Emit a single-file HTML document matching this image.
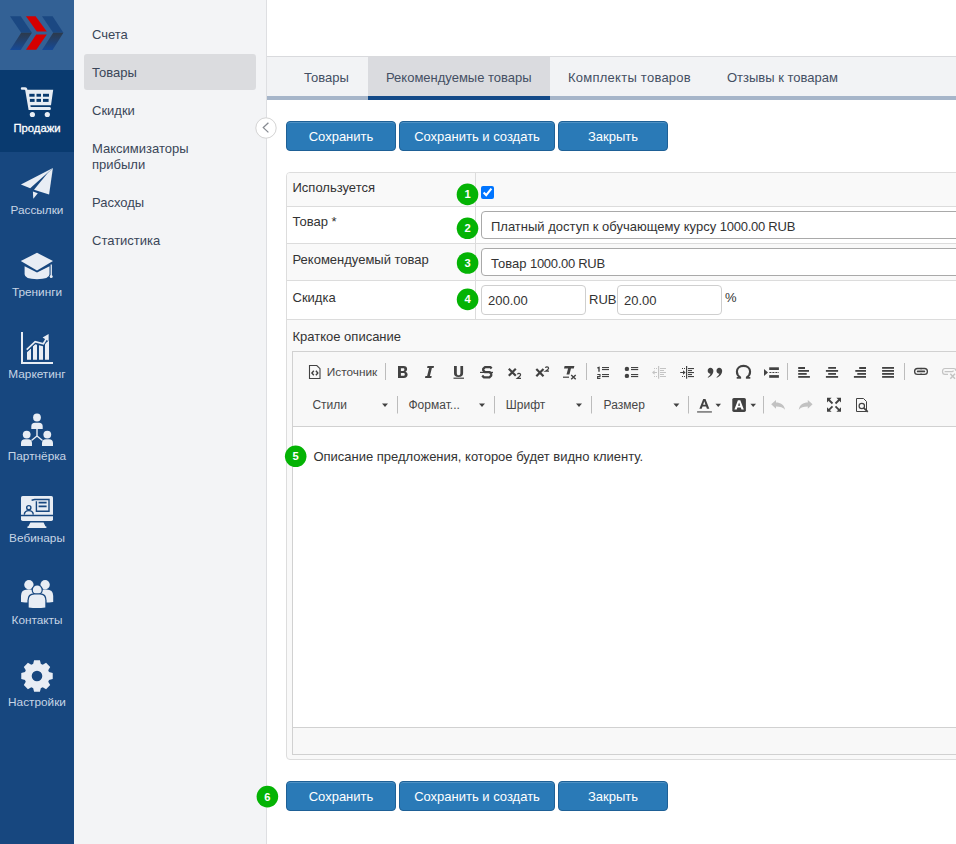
<!DOCTYPE html>
<html><head><meta charset="utf-8">
<style>
*{box-sizing:border-box}
html,body{margin:0;padding:0;width:956px;height:844px;overflow:hidden;background:#fff;font-family:"Liberation Sans",sans-serif}
.abs{position:absolute}
#nav{left:0;top:0;width:74px;height:844px;background:#17477f}
#logo{left:0;top:0;width:74px;height:70px;background:#336195}
.ni{position:absolute;left:0;width:74px;height:82px}
.ni.act{background:#093a6f}
.ni svg{position:absolute;left:0;top:0}
.ni span{position:absolute;left:0;width:74px;text-align:center;font-size:11.8px;color:#c8d5e5;top:50.5px;line-height:14px;white-space:nowrap}
.ni.act span{color:#fff;font-size:11.3px;-webkit-text-stroke:0.3px #fff}
#sub{left:74px;top:0;width:193px;height:844px;background:#f3f4f6;border-right:1px solid #dedfe2}
.si{position:absolute;left:10px;width:172px;font-size:13px;color:#3a4658;line-height:16px;padding-left:8px}
.si.act{background:#dbdcdf;border-radius:3px}
#tabs{z-index:2;left:267px;top:56px;width:689px;height:40px;border-top:1px solid #d9dadd;background:#f2f3f5}
#tabbar{left:267px;top:96px;width:689px;height:4px;background:#a6b5c9}
.tab{position:absolute;top:0;height:39px;font-size:13px;color:#444f63;line-height:39px;padding-top:1px !important;padding:0 18px;white-space:nowrap}
.tab.act{background:#dadbdf}
.tab.act:after{content:"";position:absolute;left:0;right:0;top:39px;height:4px;background:#134a88}
.btn{position:absolute;height:30px;background:#2a7ab7;border:1px solid #1e6096;border-radius:4px;box-shadow:inset 0 1px 0 rgba(255,255,255,0.18);color:#fff;font-size:13px;text-align:center;line-height:30px;white-space:nowrap}
.badge{position:absolute;width:22px;height:22px;border-radius:50%;background:#06b006;color:#fff;font-weight:bold;font-size:11px;text-align:center;line-height:22px}
#form{left:286px;top:172px;width:700px;height:588px;border:1px solid #dddddd;border-radius:4px;background:#f9f9f9;overflow:hidden}
.row{position:absolute;left:0;width:700px;border-bottom:1px solid #dcdcdc}
.lbl{position:absolute;left:5.5px;font-size:13px;color:#333;line-height:16px;white-space:nowrap}
.inp{position:absolute;background:#fff;border:1px solid #b9b9b9;border-radius:4px;font-size:13px;color:#333;white-space:nowrap;line-height:16px}
</style></head><body>

<div id="nav" class="abs">
  <div id="logo" class="abs"></div>
  <div class="ni act" style="top:70px"><span>Продажи</span></div>
  <div class="ni" style="top:152px"><span>Рассылки</span></div>
  <div class="ni" style="top:234px"><span>Тренинги</span></div>
  <div class="ni" style="top:316px"><span>Маркетинг</span></div>
  <div class="ni" style="top:398px"><span>Партнёрка</span></div>
  <div class="ni" style="top:480px"><span>Вебинары</span></div>
  <div class="ni" style="top:562px"><span>Контакты</span></div>
  <div class="ni" style="top:644px"><span>Настройки</span></div>
</div>

<svg class="abs" style="left:0;top:0" width="74" height="844" viewBox="0 0 74 844">
 <defs>
  <linearGradient id="lg" x1="0" y1="33" x2="0" y2="50" gradientUnits="userSpaceOnUse">
   <stop offset="0" stop-color="#2c3a4c"/><stop offset="1" stop-color="#164a97"/>
  </linearGradient>
 </defs>
 <!-- logo -->
 <path d="M10,16.2 H20.7 L31.9,32.8 H21.2 Z" fill="#1b4882"/>
 <path d="M21.2,32.8 H31.9 L20.7,50 H10 Z" fill="url(#lg)"/>
 <path d="M42,16.2 H52.6 L63.4,32.8 H53.2 Z" fill="#1b4882"/>
 <path d="M53.2,32.8 H63.4 L52.6,50 H42 Z" fill="url(#lg)"/>
 <path d="M26,16.2 H35.6 L46.8,31.4 H36.8 Z" fill="#d50000"/>
 <path d="M36.2,34.4 H46.8 L36.3,49.8 H26 Z" fill="#d50000"/>
 <g fill="#e8edf4">
  <!-- cart -->
  <path d="M22,87.2 H25.3 Q26.9,87.2 27.2,88.7 L27.4,89.8 H53.2 L51,105.2 H30.4 L30.7,107 H49.6 Q50.9,107 50.9,108.5 Q50.9,110 49.6,110 H28.6 L25.2,90.2 Q25,89.7 24.5,89.7 H22 Q20.8,89.7 20.8,88.45 Q20.8,87.2 22,87.2 Z"/>
  <g fill="#093a6f">
   <rect x="29.3" y="93.8" width="5.3" height="2.9"/><rect x="36.5" y="93.8" width="4.5" height="2.9"/><rect x="43" y="93.8" width="6" height="2.9"/>
   <rect x="29.9" y="98.9" width="4.7" height="3"/><rect x="36.5" y="98.9" width="4.5" height="3"/><rect x="43" y="98.9" width="5.6" height="3"/>
  </g>
  <circle cx="32.4" cy="114.5" r="2.6"/><circle cx="47.3" cy="114.5" r="2.6"/>
  <!-- plane -->
  <path d="M20.9,184.5 L52.9,168.1 L30.2,188.3 Z"/>
  <path d="M52.9,168.1 L47.7,173 L34,189.7 L49.1,194.6 Z"/>
  <path d="M32.9,191.5 L37.8,193.3 L33.3,198.7 Z"/>
  <!-- grad cap -->
  <path d="M20.8,261 L37,252.8 L53,261 L37,270.4 Z"/>
  <path d="M24.6,266.3 L37,272.6 L49.5,266.3 V274.3 Q49.5,279.2 37,279.2 Q24.6,279.2 24.6,274.3 Z"/>
  <rect x="50.6" y="264.5" width="1.3" height="11.5"/><circle cx="51.2" cy="276.6" r="1.5"/>
  <!-- chart -->
  <path d="M21,332 H23 V362 H53 V364 H21 Z"/>
  <path d="M27,359.7 V352.2 L31,348.4 V359.7 Z M33,359.7 V346.2 L35.2,344.2 L37,344.7 V359.7 Z M39,359.7 V345.3 L43,346.3 V359.7 Z M45,359.7 V343.6 L49,340.6 V359.7 Z"/>
  <path d="M26.7,349.7 L35.2,341.6 L43.4,343.7 L47,337.5" fill="none" stroke="#17477f" stroke-width="3.6"/>
  <path d="M26.7,349.7 L35.2,341.6 L43.4,343.7 L47,337.5" fill="none" stroke="#e8edf4" stroke-width="1.7"/>
  <path d="M48.6,334 L42.6,337.4 L48.6,341.2 Z"/>
  <!-- partner -->
  <circle cx="37" cy="417.5" r="3.9"/><circle cx="26.7" cy="434.6" r="3.9"/><circle cx="47.3" cy="434.6" r="3.9"/>
  <path d="M31.3,428.9 V426.5 Q31.3,422.8 35,422.8 H39 Q42.7,422.8 42.7,426.5 V428.9 Z"/>
  <path d="M21,446 V443 Q21,439.2 25,439.2 H28 Q32,439.2 32,443 V446 Z"/>
  <path d="M42,446 V443 Q42,439.2 46,439.2 H49 Q53,439.2 53,443 V446 Z"/>
  <path d="M37,428.5 V436 L31.5,440.5 M37,436 L42.5,440.5" fill="none" stroke="#e8edf4" stroke-width="1.4"/>
  <!-- monitor -->
  <path d="M22.6,496 H51.4 Q53,496 53,497.6 V514.8 H21 V497.6 Q21,496 22.6,496 Z"/>
  <path d="M21,516.2 H53 V519.2 Q53,520.9 51.3,520.9 H22.7 Q21,520.9 21,519.2 Z"/>
  <path d="M30.4,522.6 H43.6 L45.4,526.2 Q46.6,526.4 46.6,527.2 Q46.6,528 45.6,528 H28.2 Q27.2,528 27.2,527.2 Q27.2,526.4 28.4,526.2 Z"/>
  <g fill="none" stroke="#17477f" stroke-width="1.4">
   <circle cx="28.8" cy="507.7" r="2.1"/>
   <path d="M24.3,514.6 Q24.6,510.6 28.8,510.6 Q33,510.6 33.3,514.6"/>
   <path d="M31.6,500.2 L34.6,499.5 H49 V511.3 H36.4 V501.2"/>
  </g>
  <path d="M38.6,502.6 H46.6 M38.6,506.4 H46.6" fill="none" stroke="#17477f" stroke-width="1.6"/>
  <!-- contacts -->
  <circle cx="28.9" cy="584.7" r="4.7"/><circle cx="45.1" cy="584.7" r="4.7"/>
  <path d="M21,602 V596 Q21,589.6 27.6,589.6 H30.4 Q37,589.6 37,596 V602 Q29,603 21,602 Z"/>
  <path d="M37,602 V596 Q37,589.6 43.6,589.6 H46.4 Q53.2,589.6 53.2,596 V602 Q45,603 37,602 Z"/>
  <circle cx="37.2" cy="589.9" r="5.6" fill="#17477f"/>
  <circle cx="37.2" cy="589.9" r="4.4"/>
  <path d="M27.4,608.8 V600.5 Q27.4,593.2 34.4,593.2 H40 Q46.6,593.2 46.6,600.5 V608.8 Z" fill="#17477f"/>
  <path d="M28.7,607.6 V600.5 Q28.7,594.5 34.4,594.5 H40 Q45.3,594.5 45.3,600.5 V607.6 Q37,608.6 28.7,607.6 Z"/>
 </g>
 <!-- gear -->
 <g transform="translate(37,676)" fill="#e8edf4">
  <path id="gr" fill-rule="evenodd" d="M-3.90,-11.98 L-2.90,-15.73 L2.90,-15.73 L3.90,-11.98 A12.6,12.6 0 0 1 5.71,-11.23 L9.08,-13.18 L13.18,-9.08 L11.23,-5.71 A12.6,12.6 0 0 1 11.98,-3.90 L15.73,-2.90 L15.73,2.90 L11.98,3.90 A12.6,12.6 0 0 1 11.23,5.71 L13.18,9.08 L9.08,13.18 L5.71,11.23 A12.6,12.6 0 0 1 3.90,11.98 L2.90,15.73 L-2.90,15.73 L-3.90,11.98 A12.6,12.6 0 0 1 -5.71,11.23 L-9.08,13.18 L-13.18,9.08 L-11.23,5.71 A12.6,12.6 0 0 1 -11.98,3.90 L-15.73,2.90 L-15.73,-2.90 L-11.98,-3.90 A12.6,12.6 0 0 1 -11.23,-5.71 L-13.18,-9.08 L-9.08,-13.18 L-5.71,-11.23 A12.6,12.6 0 0 1 -3.90,-11.98 Z M5.3,0 A5.3,5.3 0 1 0 -5.3,0 A5.3,5.3 0 1 0 5.3,0 Z"/>
 </g>
</svg>

<div id="sub" class="abs">
  <div class="si" style="top:27px">Счета</div>
  <div class="si act" style="top:54px;height:36px;padding-top:11px">Товары</div>
  <div class="si" style="top:103px">Скидки</div>
  <div class="si" style="top:141px">Максимизаторы<br>прибыли</div>
  <div class="si" style="top:195px">Расходы</div>
  <div class="si" style="top:233px">Статистика</div>
</div>

<div id="tabs" class="abs">
  <div class="tab" style="left:19px">Товары</div>
  <div class="tab act" style="left:101px">Рекомендуемые товары</div>
  <div class="tab" style="left:283px;letter-spacing:0.25px">Комплекты товаров</div>
  <div class="tab" style="left:442px">Отзывы к товарам</div>
</div>
<div id="tabbar" class="abs"></div>

<svg class="abs" style="left:254px;top:116px" width="24" height="24" viewBox="254 116 24 24">
 <circle cx="266" cy="128" r="10.2" fill="#fff" stroke="#d4d4d4" stroke-width="1"/>
 <path d="M268.4,122.8 L263.3,127.6 L268.4,132.4" fill="none" stroke="#868a91" stroke-width="1.3"/>
</svg>
<div class="btn" style="left:286px;top:121px;width:110px">Сохранить</div>
<div class="btn" style="left:399px;top:121px;width:156px">Сохранить и создать</div>
<div class="btn" style="left:558px;top:121px;width:110px">Закрыть</div>

<div id="form" class="abs">
  <div class="row" style="top:0;height:34px;background:#f9f9f9"></div>
  <div class="row" style="top:34px;height:37px;background:#fff"></div>
  <div class="row" style="top:71px;height:37px;background:#f9f9f9"></div>
  <div class="row" style="top:108px;height:39px;background:#fff"></div>
  <div class="abs" style="left:188px;top:0;width:1px;height:147px;background:#dcdcdc"></div>
  <div class="lbl" style="top:6.7px">Используется</div>
  <div class="lbl" style="top:41px">Товар *</div>
  <div class="lbl" style="top:78.5px">Рекомендуемый товар</div>
  <div class="lbl" style="top:116.5px">Скидка</div>
  <div class="lbl" style="top:155.5px">Краткое описание</div>
  <input type="checkbox" checked class="abs" style="left:194px;top:13px;width:13px;height:13px;margin:0">
  <div class="inp" style="left:194px;top:38px;width:520px;height:28px;border-color:#a9a9a9;padding:6.5px 0 0 9px">Платный доступ к обучающему курсу <span style="letter-spacing:-0.25px">1000.00 RUB</span></div>
  <div class="inp" style="left:194px;top:75px;width:520px;height:28px;border-color:#a9a9a9;padding:7px 0 0 9px">Товар <span style="letter-spacing:-0.3px">1000.00 RUB</span></div>
  <div class="inp" style="left:194px;top:112px;width:105px;height:30px;border-color:#cfcfcf;padding:7px 0 0 6px">200.00</div>
  <div class="lbl" style="left:302px;top:118.5px">RUB</div>
  <div class="inp" style="left:330px;top:112px;width:105px;height:30px;border-color:#cfcfcf;padding:7px 0 0 6px">20.00</div>
  <div class="lbl" style="left:438px;top:117px">%</div>
</div>


<div class="abs" style="left:292px;top:351px;width:700px;height:404px;border:1px solid #d1d1d1;background:#f8f8f8"></div>
<div class="abs" style="left:293px;top:426px;width:700px;height:1px;background:#d1d1d1"></div>
<div class="abs" style="left:293px;top:427px;width:700px;height:300px;background:#fff"></div>
<div class="abs" style="left:293px;top:727px;width:700px;height:1px;background:#d1d1d1"></div>
<div class="abs" style="left:313.4px;top:449px;font-size:13px;line-height:16px;color:#333;white-space:nowrap">Описание предложения, которое будет видно клиенту.</div>
<svg class="abs" style="left:0;top:0" width="956" height="844" viewBox="0 0 956 844">
 <g fill="#424242" stroke="none">
  <!-- separators -->
  <g fill="#bcbcbc">
   <rect x="385" y="363" width="1" height="17"/><rect x="586" y="363" width="1" height="17"/><rect x="787" y="363" width="1" height="17"/><rect x="904" y="363" width="1" height="17"/>
   <rect x="397" y="396" width="1" height="17.5"/><rect x="494" y="396" width="1" height="17.5"/><rect x="591" y="396" width="1" height="17.5"/><rect x="688" y="396" width="1" height="17.5"/><rect x="763" y="396" width="1" height="17.5"/>
  </g>
  <!-- source -->
  <path d="M309.5,365.5 H316.8 L320,368.7 V378.5 H309.5 Z" fill="none" stroke="#424242" stroke-width="1.1"/>
  <path d="M313.8,370.8 L311.9,373 L313.8,375.2 M315.9,370.8 L317.8,373 L315.9,375.2" fill="none" stroke="#424242" stroke-width="1.4"/>
  <text x="326.8" y="375.6" font-family="Liberation Sans" font-size="11.8" fill="#474747">Источник</text>
  <!-- B -->
  <path fill-rule="evenodd" d="M398,366 H403.6 C405.9,366 407.1,367.3 407.1,369.1 C407.1,370.4 406.4,371.3 405.4,371.7 C406.8,372.1 407.6,373.2 407.6,374.6 C407.6,376.6 406.2,378 403.8,378 H398 Z M400.9,368.3 V370.9 H403.2 C404,370.9 404.4,370.4 404.4,369.6 C404.4,368.8 404,368.3 403.2,368.3 Z M400.9,373.1 V375.7 H403.4 C404.3,375.7 404.8,375.2 404.8,374.4 C404.8,373.6 404.3,373.1 403.4,373.1 Z"/>
  <!-- I -->
  <path d="M427.5,366 H434 L433.6,368 H431.9 L429.9,376 H431.7 L431.3,378 H425 L425.4,376 H427.1 L429.1,368 H427.1 Z"/>
  <!-- U -->
  <path d="M454,366 H456.8 V373 C456.8,374.6 457.5,375.3 458.6,375.3 C459.7,375.3 460.4,374.6 460.4,373 V366 H463.1 V373.2 C463.1,375.7 461.5,377 458.6,377 C455.6,377 454,375.7 454,373.2 Z"/>
  <rect x="453.5" y="377.6" width="10.5" height="1.2"/>
  <!-- S -->
  <path d="M491.6,368.6 L490.3,367.1 H485 L483.2,368.8 V370.3 L484.9,372.1 H489.6 L491.2,373.8 V375.6 L489.4,377.3 H484 L482.2,375.6" fill="none" stroke="#424242" stroke-width="2.3" stroke-linejoin="round"/>
  <rect x="480" y="371.8" width="13" height="1.2"/>
  <!-- x2 sub -->
  <path d="M508.8,368.8 L515.8,375.8 M515.8,368.8 L508.8,375.8" stroke="#424242" stroke-width="2.2"/>
  <path d="M517.4,374.4 Q517.8,373.4 519,373.4 Q520.6,373.4 520.6,374.8 Q520.6,375.9 517.4,378.3 H521" fill="none" stroke="#424242" stroke-width="1.2"/>
  <!-- x2 sup -->
  <path d="M536.3,369 L543.5,376.2 M543.5,369 L536.3,376.2" stroke="#424242" stroke-width="2.2"/>
  <path d="M545.4,367.9 Q545.8,366.9 547,366.9 Q548.6,366.9 548.6,368.2 Q548.6,369.3 545.4,371.2 H549" fill="none" stroke="#424242" stroke-width="1.2"/>
  <!-- Tx -->
  <path d="M564.6,366 H574.4 L573.8,368.6 H571 L569.4,374.6 H566.5 L568.1,368.6 H564 Z"/>
  <rect x="563" y="376.6" width="6" height="1.2"/>
  <path d="M571.2,374.9 L575.7,379.2 M575.7,374.9 L571.2,379.2" stroke="#424242" stroke-width="1.4"/>
  <!-- numbered list -->
  <path d="M597.4,368 L599,367.4 V371.8" fill="none" stroke="#424242" stroke-width="1.4"/>
  <path d="M597.3,374.5 H600 V376.5 H597.6 V378.4 H600.4" fill="none" stroke="#424242" stroke-width="1.1"/>
  <rect x="602" y="367" width="7" height="1.1"/><rect x="602" y="369" width="7" height="1.1"/>
  <rect x="602" y="374" width="7" height="1.1"/><rect x="602" y="376" width="7" height="1.1"/>
  <!-- bullets -->
  <circle cx="626.9" cy="368.9" r="2.2"/><circle cx="626.9" cy="375.9" r="2.2"/>
  <rect x="631" y="367" width="7.2" height="1.1"/><rect x="631" y="369" width="7.2" height="1.1"/>
  <rect x="631" y="374" width="7.2" height="1.1"/><rect x="631" y="376" width="7.2" height="1.1"/>
  <!-- outdent (disabled) -->
  <g fill="#c4c4c4">
   <rect x="658" y="366" width="1.2" height="12.7"/>
   <path d="M652,372.5 L654.6,370.2 V372 H657 V373 H654.6 V374.8 Z"/>
   <rect x="654" y="368" width="1" height="1"/><rect x="656" y="368" width="1" height="1"/>
   <rect x="654" y="376" width="1" height="1"/><rect x="656" y="376" width="1" height="1"/>
   <rect x="660" y="368" width="6" height="1"/><rect x="660" y="370" width="4" height="1"/><rect x="660" y="372" width="6" height="1"/><rect x="660" y="374" width="4" height="1"/><rect x="660" y="376" width="6" height="1"/>
  </g>
  <!-- indent -->
  <rect x="686" y="366" width="1.2" height="12.7"/>
  <path d="M685.6,372.5 L683,370.2 V372 H680.2 V373 H683 V374.8 Z"/>
  <rect x="682" y="368" width="1" height="1"/><rect x="684" y="368" width="1" height="1"/>
  <rect x="682" y="376" width="1" height="1"/><rect x="684" y="376" width="1" height="1"/>
  <rect x="688" y="368" width="6" height="1.1"/><rect x="688" y="370" width="4" height="1.1"/><rect x="688" y="372" width="6" height="1.1"/><rect x="688" y="374" width="4" height="1.1"/><rect x="688" y="376" width="6" height="1.1"/>
  <!-- quote -->
  <path id="cm" d="M710.3,367.7 C712.2,367.7 713.4,369 713.4,370.9 C713.4,373.6 711.2,376.3 708.1,377.8 L707.7,377.2 C709.3,376 710.2,374.8 710.6,373.7 C708.8,373.6 707.7,372.5 707.7,370.8 C707.7,369 708.8,367.7 710.3,367.7 Z"/>
  <use href="#cm" x="8.8"/>
  <!-- omega -->
  <path d="M740.4,377.4 C737.9,376 736.9,373.9 736.9,371.7 C736.9,368.1 739.6,365.9 743.5,365.9 C747.4,365.9 750.1,368.1 750.1,371.7 C750.1,373.9 749.1,376 746.6,377.4" fill="none" stroke="#424242" stroke-width="2.1"/>
  <rect x="736.7" y="377" width="4.4" height="1.7"/><rect x="745.9" y="377" width="4.4" height="1.7"/>
  <!-- create div -->
  <path d="M764,369 L768,372.5 L764,376 Z"/>
  <rect x="769.2" y="367.3" width="9.7" height="2.7"/><rect x="769.2" y="375.1" width="9.7" height="2.7"/>
  <path d="M769.4,372.5 H779" stroke="#424242" stroke-width="1" stroke-dasharray="2 1"/>
  <!-- aligns -->
  <rect x="798.2" y="367" width="6.8" height="2"/><rect x="798.2" y="370" width="10.8" height="1.8"/><rect x="798.2" y="373" width="8.5" height="1.8"/><rect x="798.2" y="376" width="11.7" height="1.8"/>
  <rect x="828.2" y="367" width="7.8" height="1.8"/><rect x="825.9" y="370" width="12.2" height="1.8"/><rect x="828.2" y="373" width="7.8" height="1.8"/><rect x="825.9" y="376" width="12.2" height="1.8"/>
  <rect x="859.2" y="367" width="6.8" height="2"/><rect x="855.3" y="370" width="10.7" height="1.8"/><rect x="857.3" y="373" width="8.7" height="1.8"/><rect x="853.9" y="376" width="12.1" height="1.8"/>
  <rect x="882.1" y="367" width="11.9" height="1.8"/><rect x="882.1" y="370" width="11.9" height="1.8"/><rect x="882.1" y="373" width="11.9" height="1.8"/><rect x="882.1" y="376" width="11.9" height="1.8"/>
  <!-- link -->
  <rect x="914.6" y="368.5" width="12.8" height="5.8" rx="2.9" fill="none" stroke="#424242" stroke-width="1.3"/>
  <rect x="916.8" y="370.5" width="8.4" height="1.8" rx="0.9"/>
  <rect x="920.6" y="367.9" width="0.9" height="1.6"/><rect x="920.6" y="373.3" width="0.9" height="1.6"/>
  <!-- unlink -->
  <g fill="none" stroke="#c4c4c4" stroke-width="1.2">
   <path d="M947.5,368.5 H945 C943.3,368.5 942.5,369.9 942.5,371.4 C942.5,372.9 943.3,374.3 945,374.3 H948"/>
   <path d="M944.6,371.7 H952 C952.8,371.7 953.2,371.1 953.2,370.4" stroke-width="1.3"/>
   <path d="M946.8,368.5 H953.5 C955,368.5 956,369.5 956,371"/>
   <path d="M950.3,373.8 L955,378.8 M955,373.8 L950.3,378.8" stroke-width="1.5"/>
  </g>
  <!-- row 2 combos -->
  <g font-family="Liberation Sans" font-size="12" fill="#474747">
   <text x="312.4" y="408.8">Стили</text>
   <text x="408.5" y="408.8">Формат...</text>
   <text x="505.8" y="408.8">Шрифт</text>
   <text x="603.6" y="408.8">Размер</text>
  </g>
  <path d="M382,403.6 H388 L385,407 Z M479,403.6 H485 L482,407 Z M576,403.6 H582 L579,407 Z M673.4,403.6 H679.4 L676.4,407 Z"/>
  <!-- text color -->
  <path d="M703.2,399.1 H705.5 L709.3,408.7 H706.9 L706.1,406.5 H702.5 L701.7,408.7 H699.4 Z M703.1,404.7 H705.5 L704.3,401.3 Z" fill-rule="evenodd"/>
  <rect x="697.1" y="411" width="14.8" height="1.8" fill="#888"/>
  <path d="M715.5,403.7 H721 L718.25,407 Z"/>
  <!-- bg color -->
  <rect x="732.3" y="398" width="13.6" height="13.9" rx="1.6"/>
  <path d="M737.9,400.2 H740.3 L743.8,409.6 H741.5 L740.8,407.6 H737.4 L736.7,409.6 H734.4 Z M738,405.7 H740.2 L739.1,402.5 Z" fill="#fff" fill-rule="evenodd"/>
  <path d="M750.4,403.7 H756 L753.2,407 Z"/>
  <!-- undo / redo -->
  <g fill="#c2c2c2">
   <path d="M771.2,404.3 L776,400 V402.6 C780.5,402.6 784.4,404.8 785,409.8 C783.2,407.3 780.2,406.4 776,406.4 V408.8 Z"/>
   <path d="M812.6,404.3 L807.8,400 V402.6 C803.3,402.6 799.4,404.8 798.8,409.8 C800.6,407.3 803.6,406.4 807.8,406.4 V408.8 Z"/>
  </g>
  <!-- maximize -->
  <g stroke="#424242" stroke-width="1.8" fill="none">
   <path d="M828.5,399.5 L832.5,403.5 M839.5,399.5 L835.5,403.5 M828.5,410.3 L832.5,406.3 M839.5,410.3 L835.5,406.3"/>
  </g>
  <path d="M827,397.8 H831.6 L827,402.4 Z M841,397.8 H836.4 L841,402.4 Z M827,411.8 H831.6 L827,407.2 Z M841,411.8 H836.4 L841,407.2 Z"/>
  <!-- preview -->
  <path d="M856.5,398.5 H863.5 L866.5,401.5 V411.5 H856.5 Z" fill="none" stroke="#424242" stroke-width="1"/>
  <circle cx="861.8" cy="406" r="2.7" fill="#f8f8f8" stroke="#424242" stroke-width="1.2"/>
  <path d="M863.7,407.9 L867.8,411.8" stroke="#424242" stroke-width="1.7"/>
 </g>
</svg>
<div class="btn" style="left:286px;top:781px;width:110px">Сохранить</div>
<div class="btn" style="left:399px;top:781px;width:156px">Сохранить и создать</div>
<div class="btn" style="left:558px;top:781px;width:110px">Закрыть</div>

<svg class="abs" style="left:0;top:0" width="956" height="844" viewBox="0 0 956 844">
 <circle cx="467.5" cy="194.4" r="10.8" fill="#04b304"/><text x="467.5" y="198.4" text-anchor="middle" font-family="Liberation Sans" font-weight="bold" font-size="11.2" fill="#fff">1</text>
 <circle cx="467.5" cy="228.3" r="10.8" fill="#04b304"/><text x="467.5" y="232.3" text-anchor="middle" font-family="Liberation Sans" font-weight="bold" font-size="11.2" fill="#fff">2</text>
 <circle cx="467.6" cy="263" r="10.8" fill="#04b304"/><text x="467.6" y="267" text-anchor="middle" font-family="Liberation Sans" font-weight="bold" font-size="11.2" fill="#fff">3</text>
 <circle cx="467.6" cy="299.4" r="10.8" fill="#04b304"/><text x="467.6" y="303.4" text-anchor="middle" font-family="Liberation Sans" font-weight="bold" font-size="11.2" fill="#fff">4</text>
 <circle cx="295.7" cy="456.3" r="10.8" fill="#04b304"/><text x="295.7" y="460.3" text-anchor="middle" font-family="Liberation Sans" font-weight="bold" font-size="11.2" fill="#fff">5</text>
 <circle cx="267.4" cy="796.6" r="10.8" fill="#04b304"/><text x="267.4" y="800.6" text-anchor="middle" font-family="Liberation Sans" font-weight="bold" font-size="11.2" fill="#fff">6</text>
</svg>

</body></html>
